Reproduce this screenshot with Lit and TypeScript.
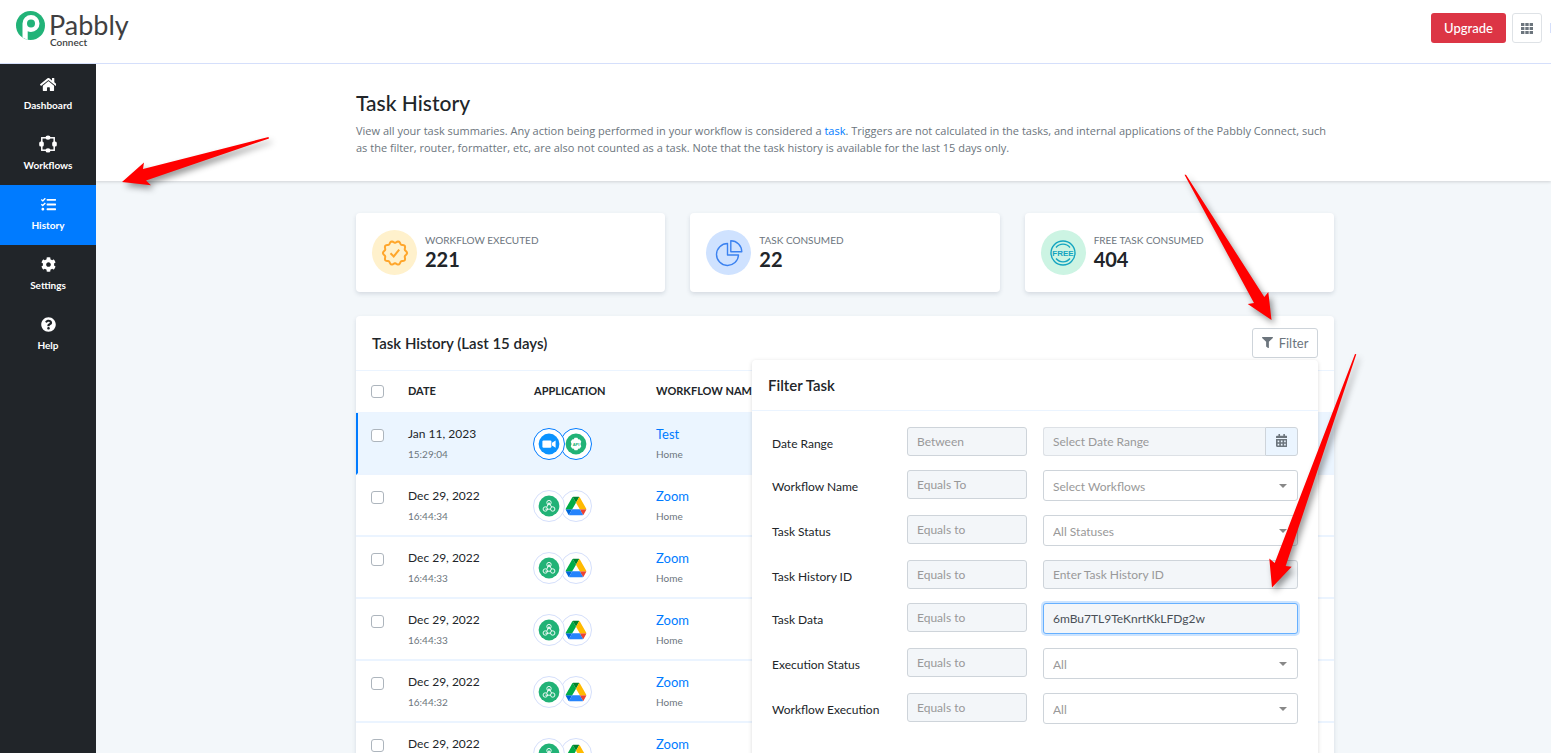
import { LitElement, html, css, svg, nothing } from "lit";
import { customElement, property } from "lit/decorators.js";
import { classMap } from "lit/directives/class-map.js";

const glyphs = {
  home: {
    box: "0 0 576 512",
    d: "M280.37 148.26L96 300.11V464a16 16 0 0 0 16 16l112.06-.29a16 16 0 0 0 15.92-16V368a16 16 0 0 1 16-16h64a16 16 0 0 1 16 16v95.64a16 16 0 0 0 16 16.05L464 480a16 16 0 0 0 16-16V300L295.67 148.26a12.19 12.19 0 0 0-15.3 0zM571.6 251.47L488 182.56V44.05a12 12 0 0 0-12-12h-56a12 12 0 0 0-12 12v72.61L318.47 43a48 48 0 0 0-61 0L4.34 251.47a12 12 0 0 0-1.6 16.9l25.5 31A12 12 0 0 0 45.15 301l235.22-193.74a12.19 12.19 0 0 1 15.3 0L530.9 301a12 12 0 0 0 16.9-1.6l25.5-31a12 12 0 0 0-1.7-16.93z",
  },
  tasks: {
    box: "0 0 512 512",
    d: "M139.61 35.5a12 12 0 0 0-17 0L58.93 98.81l-22.7-22.12a12 12 0 0 0-17 0L3.53 92.41a12 12 0 0 0 0 17l47.59 47.4a12.78 12.78 0 0 0 17.61 0l15.59-15.62L156.52 69a12.09 12.09 0 0 0 .09-17zm0 159.19a12 12 0 0 0-17 0l-63.68 63.72-22.7-22.1a12 12 0 0 0-17 0L3.53 252a12 12 0 0 0 0 17L51 316.5a12.77 12.77 0 0 0 17.6 0l15.7-15.69 72.2-72.22a12 12 0 0 0 .09-16.9zM64 368c-26.49 0-48.59 21.5-48.59 48S37.53 464 64 464a48 48 0 0 0 0-96zm432 16H208a16 16 0 0 0-16 16v32a16 16 0 0 0 16 16h288a16 16 0 0 0 16-16v-32a16 16 0 0 0-16-16zm0-320H208a16 16 0 0 0-16 16v32a16 16 0 0 0 16 16h288a16 16 0 0 0 16-16V80a16 16 0 0 0-16-16zm0 160H208a16 16 0 0 0-16 16v32a16 16 0 0 0 16 16h288a16 16 0 0 0 16-16v-32a16 16 0 0 0-16-16z",
  },
  cog: {
    box: "0 0 512 512",
    d: "M487.4 315.7l-42.6-24.6c4.3-23.2 4.3-47 0-70.2l42.6-24.6c4.9-2.8 7.1-8.6 5.5-14-11.1-35.6-30-67.8-54.7-94.6-3.8-4.1-10-5.1-14.8-2.3L380.8 110c-17.9-15.4-38.5-27.3-60.8-35.1V25.8c0-5.6-3.9-10.5-9.4-11.7-36.7-8.2-74.3-7.8-109.2 0-5.5 1.2-9.4 6.1-9.4 11.7V75c-22.2 7.9-42.8 19.8-60.8 35.1L88.7 85.5c-4.9-2.8-11-1.9-14.8 2.3-24.7 26.7-43.6 58.9-54.7 94.6-1.7 5.4.6 11.2 5.5 14L67.3 221c-4.3 23.2-4.3 47 0 70.2l-42.6 24.6c-4.9 2.8-7.1 8.6-5.5 14 11.1 35.6 30 67.8 54.7 94.6 3.8 4.1 10 5.1 14.8 2.3l42.6-24.6c17.9 15.4 38.5 27.3 60.8 35.1v49.2c0 5.6 3.9 10.5 9.4 11.7 36.7 8.2 74.3 7.8 109.2 0 5.5-1.2 9.4-6.1 9.4-11.7v-49.2c22.2-7.9 42.8-19.8 60.8-35.1l42.6 24.6c4.9 2.8 11 1.9 14.8-2.3 24.7-26.7 43.6-58.9 54.7-94.6 1.5-5.5-.7-11.3-5.6-14.1zM256 336c-44.1 0-80-35.9-80-80s35.9-80 80-80 80 35.9 80 80-35.9 80-80 80z",
  },
  help: {
    box: "0 0 512 512",
    d: "M504 256c0 136.997-111.043 248-248 248S8 392.997 8 256C8 119.083 119.043 8 256 8s248 111.083 248 248zM262.655 90c-54.497 0-89.255 22.957-116.549 63.758-3.536 5.286-2.353 12.415 2.715 16.258l34.699 26.31c5.205 3.947 12.621 3.008 16.665-2.122 17.864-22.658 30.113-35.797 57.303-35.797 20.429 0 45.698 13.148 45.698 32.958 0 14.976-12.363 22.667-32.534 33.976C247.128 238.528 216 254.941 216 296v4c0 6.627 5.373 12 12 12h56c6.627 0 12-5.373 12-12v-1.333c0-28.462 83.186-29.647 83.186-106.667 0-58.002-60.165-102-116.531-102zM256 338c-25.365 0-46 20.635-46 46 0 25.364 20.635 46 46 46s46-20.636 46-46c0-25.365-20.635-46-46-46z",
  },
  filter: {
    box: "0 0 512 512",
    d: "M487.976 0H24.028C2.71 0-8.047 25.866 7.058 40.971L192 225.941V432c0 7.831 3.821 15.17 10.237 19.662l80 55.98C298.02 518.69 320 507.493 320 487.98V225.941l184.947-184.97C520.021 25.896 509.338 0 487.976 0z",
  },
  calendar: {
    box: "0 0 448 512",
    d: "M0 464c0 26.5 21.5 48 48 48h352c26.5 0 48-21.5 48-48V192H0zM64 256h64v64H64zM192 256h64v64h-64zM320 256h64v64h-64zM64 384h64v64H64zM192 384h64v64h-64zM320 384h64v64h-64zM400 64h-48V16c0-8.8-7.2-16-16-16h-32c-8.8 0-16 7.2-16 16v48H160V16c0-8.8-7.2-16-16-16h-32c-8.8 0-16 7.2-16 16v48H48C21.5 64 0 85.5 0 112v48h448v-48c0-26.5-21.5-48-48-48z",
  },
  grid: {
    box: "0 0 12 11",
    d: "M0 0h3.4v3H0zM4.3 0h3.4v3H4.3zM8.6 0H12v3H8.6zM0 4h3.4v3H0zM4.3 4h3.4v3H4.3zM8.6 4H12v3H8.6zM0 8h3.4v3H0zM4.3 8h3.4v3H4.3zM8.6 8H12v3H8.6z",
  },
};

type GlyphName = keyof typeof glyphs;

const glyph = (name: GlyphName) => html`
  <svg class="glyph" viewBox=${glyphs[name].box} aria-hidden="true">
    <path fill="currentColor" fill-rule="evenodd" d=${glyphs[name].d}></path>
  </svg>
`;

const workflowGlyph = html`
  <svg class="glyph" viewBox="0 0 18 18" aria-hidden="true">
    <rect x="2.8" y="2.8" width="12.4" height="12.4" fill="none" stroke="currentColor" stroke-width="1.5"></rect>
    <g fill="currentColor">
      <ellipse cx="9" cy="2.6" rx="2.5" ry="2.2"></ellipse>
      <ellipse cx="9" cy="15.4" rx="2.5" ry="2.2"></ellipse>
      <rect x="0.2" y="6.4" width="4.6" height="5.2" rx="1.6"></rect>
      <rect x="13.2" y="6.4" width="4.6" height="5.2" rx="1.6"></rect>
    </g>
  </svg>
`;

@customElement("app-badge")
export class AppBadge extends LitElement {
  @property() kind = "webhook";

  static styles = css`
    :host { display: block; }
    svg { display: block; width: 22px; height: 22px; }
    text { font: 700 4px "Liberation Sans", sans-serif; }
  `;

  render() {
    if (this.kind === "zoom") {
      return html`<svg viewBox="0 0 22 22" role="img" aria-label="Zoom meetings">
        <circle cx="11" cy="11" r="10.4" fill="#0b93ff"></circle>
        <rect x="4.4" y="7.4" width="9" height="7.4" rx="1.2" fill="#fff"></rect>
        <path d="M14 9.8l3.6-2.3v7.2L14 12.4z" fill="#fff"></path>
      </svg>`;
    }
    if (this.kind === "api") {
      return html`<svg viewBox="0 0 22 22" role="img" aria-label="API request">
        <circle cx="11" cy="11" r="10.4" fill="#21b276"></circle>
        <path d="M9.6 4.800h2.800l.8 1.500 1.700.1 1.400 2.400-.7 1.500v1.400l.7 1.500-1.400 2.400-1.700.1-.8 1.500H9.600l-.8-1.500-1.700-.1-1.400-2.400.7-1.500v-1.400l-.7-1.500 1.400-2.400 1.700-.1z" fill="#fff"></path>
        <text x="11" y="12.500" text-anchor="middle" fill="#21b276">API</text>
      </svg>`;
    }
    if (this.kind === "drive") {
      return html`<svg viewBox="-3 -7 93.3 92" role="img" aria-label="Drive">
        <path d="m6.6 66.85 3.85 6.65c.8 1.4 1.95 2.5 3.3 3.3l13.75-23.8h-27.5c0 1.55.4 3.1 1.2 4.5z" fill="#0066da"></path>
        <path d="m43.65 25-13.75-23.8c-1.35.8-2.5 1.9-3.3 3.3l-25.4 44a9.06 9.06 0 0 0 -1.2 4.5h27.5z" fill="#00ac47"></path>
        <path d="m73.55 76.8c1.35-.8 2.5-1.9 3.3-3.3l1.6-2.75 7.65-13.25c.8-1.4 1.2-2.95 1.2-4.5h-27.502l5.852 11.5z" fill="#ea4335"></path>
        <path d="m43.65 25 13.75-23.8c-1.35-.8-2.9-1.2-4.5-1.2h-18.5c-1.6 0-3.15.45-4.5 1.2z" fill="#00832d"></path>
        <path d="m59.8 53h-32.3l-13.75 23.8c1.35.8 2.9 1.2 4.5 1.2h50.8c1.6 0 3.15-.45 4.5-1.2z" fill="#2684fc"></path>
        <path d="m73.4 26.5-12.7-22c-.8-1.4-1.95-2.5-3.3-3.3l-13.75 23.8 16.15 28h27.45c0-1.55-.4-3.1-1.2-4.5z" fill="#ffba00"></path>
      </svg>`;
    }
    return html`<svg viewBox="0 0 22 22" role="img" aria-label="Webhook">
      <circle cx="11" cy="11" r="10.4" fill="#21b276"></circle>
      <g fill="none" stroke="#fff" stroke-width="0.900">
        <circle cx="11" cy="7.600" r="2.200"></circle>
        <circle cx="7.300" cy="14" r="2.200"></circle>
        <circle cx="14.700" cy="14" r="2.200"></circle>
        <path d="M11 7.600l-2.200 4.400M11 7.600l2.600 4.400M7.300 14.200h5"></path>
      </g>
    </svg>`;
  }
}

const navItems: { label: string; icon: GlyphName | "workflow"; active?: boolean }[] = [
  { label: "Dashboard", icon: "home" },
  { label: "Workflows", icon: "workflow" },
  { label: "History", icon: "tasks", active: true },
  { label: "Settings", icon: "cog" },
  { label: "Help", icon: "help" },
];

const badgePoints = Array.from({ length: 73 }, (_, i) => {
  const a = (i / 72) * Math.PI * 2;
  const r = 11.2 + 0.9 * Math.cos(a * 10 + Math.PI);
  return `${(14 + r * Math.sin(a)).toFixed(2)},${(14 - r * Math.cos(a)).toFixed(2)}`;
}).join(" ");

const stats = [
  {
    label: "WORKFLOW EXECUTED",
    value: "221",
    tone: "amber",
    art: svg`<polygon points=${badgePoints} fill="none" stroke="#ffa62b" stroke-width="2" stroke-linejoin="round"></polygon>
      <path d="M9.500 14.200l3.200 3.300 5.500-6.800" fill="none" stroke="#ffa62b" stroke-width="2"></path>`,
  },
  {
    label: "TASK CONSUMED",
    value: "22",
    tone: "blue",
    art: svg`<g fill="none" stroke="#3b82f0" stroke-width="1.400" stroke-linejoin="round">
      <path d="M12.500 4.500a11 11 0 1 0 11 11.500h-11z"></path>
      <path d="M15.800 1.700v11h11a11 11 0 0 0-11-11z"></path></g>`,
  },
  {
    label: "FREE TASK CONSUMED",
    value: "404",
    tone: "green",
    art: svg`<g fill="none" stroke="#14a5c0">
      <circle cx="14" cy="14" r="12" stroke-width="1.400"></circle>
      <path d="M7 8.500a9 9 0 0 1 14 0M7 19.500a9 9 0 0 0 14 0" stroke-width="1.300"></path></g>
      <text class="stamp" x="14" y="17" text-anchor="middle" fill="#14a5c0">FREE</text>`,
  },
];

const rows = [
  { date: "Jan 11, 2023", time: "15:29:04", apps: ["zoom", "api"], name: "Test", active: true },
  { date: "Dec 29, 2022", time: "16:44:34", apps: ["webhook", "drive"], name: "Zoom" },
  { date: "Dec 29, 2022", time: "16:44:33", apps: ["webhook", "drive"], name: "Zoom" },
  { date: "Dec 29, 2022", time: "16:44:33", apps: ["webhook", "drive"], name: "Zoom" },
  { date: "Dec 29, 2022", time: "16:44:32", apps: ["webhook", "drive"], name: "Zoom" },
  { date: "Dec 29, 2022", time: "16:44:32", apps: ["webhook", "drive"], name: "Zoom" },
];

const filters = [
  { id: "range", label: "Date Range", op: "Between", kind: "date", text: "Select Date Range" },
  { id: "workflow", label: "Workflow Name", op: "Equals To", kind: "select", text: "Select Workflows" },
  { id: "status", label: "Task Status", op: "Equals to", kind: "select", text: "All Statuses" },
  { id: "history", label: "Task History ID", op: "Equals to", kind: "text", text: "Enter Task History ID" },
  { id: "data", label: "Task Data", op: "Equals to", kind: "filled", text: "6mBu7TL9TeKnrtKkLFDg2w" },
  { id: "execution", label: "Execution Status", op: "Equals to", kind: "select", text: "All" },
  { id: "mode", label: "Workflow Execution", op: "Equals to", kind: "select", text: "All" },
];

@customElement("app-root")
export class AppRoot extends LitElement {
  static styles = css`
    :host {
      display: flex;
      flex-direction: column;
      position: relative;
      height: 100vh;
      overflow: hidden;
      background: #f3f7fa;
      color: #212529;
      font: 400 12px/18px Lato, "Noto Sans", sans-serif;
    }
    * { box-sizing: border-box; }
    a { color: #007bff; text-decoration: none; }
    button, input, select { font: inherit; margin: 0; }
    .glyph { display: block; }

    .topbar {
      display: flex;
      justify-content: space-between;
      flex: none;
      height: 64px;
      padding-left: 16px;
      overflow: hidden;
      background: #fff;
      border-bottom: 1px solid #d5dffb;
    }
    .brand { display: flex; gap: 4px; padding-top: 11px; color: #403f41; }
    .brand svg { width: 29px; height: 29px; }
    .wordmark { display: flex; flex-direction: column; }
    .wordmark b { font-weight: 400; font-size: 27px; line-height: 28px; }
    .wordmark span { font-size: 10px; line-height: 6px; font-weight: 600; padding-left: 1px; }
    .actions { display: flex; gap: 6px; padding-top: 13px; align-items: flex-start; }
    .upgrade {
      width: 75px; height: 30px; padding: 0 0 1px; border: 0; border-radius: 3px;
      background: #dc3545; color: #fff; font-size: 13px; font-weight: 500;
    }
    .apps {
      display: grid; place-items: center; width: 30px; height: 30px; padding: 0;
      background: #fff; border: 1px solid #dee2e6; border-radius: 3px; color: #6c757d;
    }
    .apps .glyph { width: 12px; height: 11px; }
    .avatar { width: 1px; height: 10px; margin: 10px 0 0 2px; background: #d5dffb; }

    .shell { display: flex; flex: 1; min-height: 0; }
    .sidebar { flex: none; width: 96px; padding-top: 1px; background: #212529; }
    .nav {
      display: flex; flex-direction: column; align-items: center; gap: 5px;
      height: 60px; padding-top: 10px; color: #fff; font-size: 10px; line-height: 14px; font-weight: 700;
    }
    .nav.on { background: #007bff; }
    .nav-icon { display: grid; place-items: center; height: 18px; }
    .nav-icon .glyph { height: 15px; }
    .nav-icon.wide .glyph { height: 18px; }

    main { flex: 1; min-width: 0; overflow: hidden; }
    .lane { display: grid; grid-template-columns: minmax(16px, 260fr) minmax(0, 978px) minmax(16px, 217fr); }
    .lane > * { grid-column: 2; min-width: 0; }
    .intro { background: #fff; padding: 25px 0; box-shadow: 0 1px 3px rgba(0, 0, 0, 0.15); }
    h1 { margin: 0 0 5px; font-size: 21px; line-height: 28px; font-weight: 500; }
    .intro p { margin: 0; font: 400 11px/17px "Open Sans", sans-serif; color: #6c757d; }

    .stats { display: grid; grid-template-columns: repeat(3, 1fr); gap: 25px; margin-top: 32px; }
    .card { background: #fff; border-radius: 4px; box-shadow: 0 2px 4px rgba(40, 60, 90, 0.15); }
    .stat { display: flex; gap: 8px; height: 79px; padding: 17px 16px; }
    .disc { display: grid; place-items: center; flex: none; width: 45px; height: 45px; border-radius: 50%; }
    .disc svg { width: 28px; height: 28px; }
    .disc.amber { background: #fff1cc; }
    .disc.blue { background: #cfe2ff; }
    .disc.green { background: #ccf4e3; }
    .stamp { font: 700 8px "Liberation Sans", sans-serif; }
    .stat-text { padding-top: 3px; color: #6c757d; font-size: 10px; line-height: 14px; }
    .stat-text strong { display: block; color: #212529; font-size: 20px; line-height: 24px; }

    .history { position: relative; margin-top: 24px; }
    .history-head {
      display: flex; align-items: center; justify-content: space-between;
      height: 55px; padding: 0 16px; border-bottom: 1px solid #ebf4ff;
    }
    h2, h3 { margin: 0; font-size: 15px; line-height: 20px; font-weight: 600; }
    .filter-btn {
      display: flex; align-items: center; justify-content: center; gap: 6px; width: 66px; height: 30px; padding: 0 0 1px;
      background: #fff; border: 1px solid #ced4da; border-radius: 3px; color: #6c757d; font-size: 13px;
    }
    .filter-btn .glyph { width: 11px; height: 11px; }

    table { width: 100%; table-layout: fixed; border-spacing: 0; text-align: left; }
    .c-check { width: 40px; }
    .c-date { width: 126px; }
    .c-app { width: 122px; }
    th { height: 42px; padding: 0 0 1px 12px; font-size: 11px; font-weight: 700; border-bottom: 1px solid #ebf4ff; white-space: nowrap; }
    td { height: 62px; padding: 12px 0 0 12px; vertical-align: top; border-bottom: 2px solid #ebf4ff; }
    th:first-child, td:first-child { padding-left: 15px; }
    tr.on td { background: #ebf5ff; }
    tr.on td:first-child { border-left: 2px solid #007bff; padding-left: 13px; }
    td input, th input {
      appearance: none; display: block; width: 13px; height: 13px; background: #fff;
      border: 1px solid #adb5bd; border-radius: 3px;
    }
    td input { margin-top: 4px; }
    .main-line { display: block; line-height: 18px; }
    a.main-line { font-size: 13px; }
    .sub-line { display: block; padding-top: 3px; font-size: 10px; line-height: 16px; color: #6c757d; }
    .chain { display: flex; margin-left: -1px; padding-top: 3px; }
    .bubble {
      display: grid; place-items: center; width: 32px; height: 32px; background: #fff;
      border: 1px solid #d5dffb; border-radius: 50%;
    }
    .bubble:first-child { position: relative; z-index: 1; }
    .bubble + .bubble { margin-left: -5px; }
    tr.on .bubble { border-color: #007bff; }

    .panel {
      position: absolute; top: 44px; right: 16px; z-index: 2; width: 566px; height: 460px;
      background: #fff; border-radius: 4px; box-shadow: 0 1px 4px rgba(0, 0, 0, 0.15);
    }
    .panel h3 { padding: 15px 16px; border-bottom: 1px solid #ebf4ff; }
    .fields { display: grid; gap: 14px; padding: 16px 20px; }
    .field { display: grid; grid-template-columns: 119px 120px 1fr; column-gap: 16px; align-items: start; }
    .field > label { padding-top: 8px; line-height: 18px; white-space: nowrap; }
    .box {
      display: block; width: 100%; height: 29px; padding: 0 9px; border: 1px solid #ced4da; border-radius: 3px;
      background: #f3f6f9; color: #999; font-size: 12px; outline: 0;
    }
    .box::placeholder { color: #999; opacity: 1; }
    .box.filled {
      height: 31px; color: #495057; border-color: #66b0ff;
      box-shadow: 0 0 0 2px #cce4ff;
    }
    .pick { position: relative; }
    .pick::after {
      content: ""; position: absolute; right: 11px; top: 14px;
      border: 4px solid transparent; border-top-color: #888; border-bottom: 0;
    }
    .pick .box { appearance: none; height: 31px; padding-top: 2px; background: #fff; }
    .range { display: flex; }
    .range .box { flex: 1; min-width: 0; border-color: #dde1e6; border-right: 0; border-radius: 3px 0 0 3px; }
    .range button {
      display: grid; place-items: center; width: 33px; height: 29px; padding: 0 0 2px; color: #6c757d;
      background: #ebf5ff; border: 1px solid #ced4da; border-radius: 0 3px 3px 0;
    }
    .range .glyph { height: 13px; }

    .marks {
      position: absolute; top: 0; left: 0; z-index: 5; width: 1551px; height: 753px; pointer-events: none;
      filter: drop-shadow(3px 4px 3px rgba(0, 0, 0, 0.4));
    }
  `;

  private control(f: (typeof filters)[number]) {
    switch (f.kind) {
      case "date":
        return html`<div class="range">
          <input class="box" id=${f.id} placeholder=${f.text} />
          <button type="button" aria-label="Open calendar">${glyph("calendar")}</button>
        </div>`;
      case "select":
        return html`<div class="pick"><select class="box" id=${f.id}><option>${f.text}</option></select></div>`;
      case "filled":
        return html`<input class="box filled" id=${f.id} .value=${f.text} />`;
      default:
        return html`<input class="box" id=${f.id} placeholder=${f.text} />`;
    }
  }

  render() {
    return html`
      <header class="topbar">
        <div class="brand">
          <svg viewBox="0 0 29 29" aria-hidden="true">
            <circle cx="14.500" cy="14.500" r="14.500" fill="#22b378"></circle>
            <path d="M6.500 26.500V12.500a8.500 8.500 0 1 1 8.500 8.500c-1.200 0-2.300-.2-3.300-.7V29z" fill="#fff"></path>
            <circle cx="15" cy="12.500" r="4" fill="#22b378"></circle>
          </svg>
          <div class="wordmark"><b>Pabbly</b><span>Connect</span></div>
        </div>
        <div class="actions">
          <button class="upgrade" type="button">Upgrade</button>
          <button class="apps" type="button" aria-label="Apps">${glyph("grid")}</button>
          <span class="avatar"></span>
        </div>
      </header>
      <div class="shell">
        <nav class="sidebar">
          ${navItems.map(
            (n) => html`<a href="#" class=${classMap({ nav: true, on: !!n.active })}>
              <span class=${classMap({ "nav-icon": true, wide: n.icon === "workflow" })}>
                ${n.icon === "workflow" ? workflowGlyph : glyph(n.icon)}
              </span>
              ${n.label}
            </a>`
          )}
        </nav>
        <main>
          <section class="intro lane">
            <div>
              <h1>Task History</h1>
              <p>
                View all your task summaries. Any action being performed in your workflow is considered a
                <a href="#">task</a>. Triggers are not calculated in the tasks, and internal applications of the Pabbly
                Connect, such as the filter, router, formatter, etc, are also not counted as a task. Note that the task
                history is available for the last 15 days only.
              </p>
            </div>
          </section>
          <div class="lane">
            <section class="stats">
              ${stats.map(
                (s) => html`<div class="card stat">
                  <span class="disc ${s.tone}"><svg viewBox="0 0 28 28" aria-hidden="true">${s.art}</svg></span>
                  <div class="stat-text">${s.label}<strong>${s.value}</strong></div>
                </div>`
              )}
            </section>
            <section class="card history">
              <div class="history-head">
                <h2>Task History (Last 15 days)</h2>
                <button class="filter-btn" type="button">${glyph("filter")}Filter</button>
              </div>
              <table>
                <colgroup><col class="c-check" /><col class="c-date" /><col class="c-app" /><col /></colgroup>
                <thead>
                  <tr>
                    <th><input type="checkbox" aria-label="Select all" /></th>
                    <th>DATE</th>
                    <th>APPLICATION</th>
                    <th>WORKFLOW NAME</th>
                  </tr>
                </thead>
                <tbody>
                  ${rows.map(
                    (r) => html`<tr class=${r.active ? "on" : nothing}>
                      <td><input type="checkbox" aria-label="Select ${r.date} ${r.time}" /></td>
                      <td><span class="main-line">${r.date}</span><span class="sub-line">${r.time}</span></td>
                      <td>
                        <div class="chain">
                          ${r.apps.map((a) => html`<span class="bubble"><app-badge kind=${a}></app-badge></span>`)}
                        </div>
                      </td>
                      <td><a class="main-line" href="#">${r.name}</a><span class="sub-line">Home</span></td>
                    </tr>`
                  )}
                </tbody>
              </table>
              <form class="panel">
                <h3>Filter Task</h3>
                <div class="fields">
                  ${filters.map(
                    (f) => html`<div class="field">
                      <label for=${f.id}>${f.label}</label>
                      <input class="box" readonly aria-label="${f.label} operator" placeholder=${f.op} />
                      ${this.control(f)}
                    </div>`
                  )}
                </div>
              </form>
            </section>
          </div>
        </main>
      </div>
      <svg class="marks" viewBox="0 0 1551 753" fill="#f00" aria-hidden="true">
        <polygon points="122,182 144,162.500 143,169 268.500,137 269,138.500 146,180.500 151,185.300"></polygon>
        <polygon points="1271.500,320 1247.700,304 1254,303 1184.500,174.800 1186,174.800 1264.300,297 1268.300,292"></polygon>
        <polygon points="1272,587.500 1269.300,558.600 1274.700,563 1355,354 1356.300,354.300 1285.700,566 1291.700,566.700"></polygon>
      </svg>
    `;
  }
}
